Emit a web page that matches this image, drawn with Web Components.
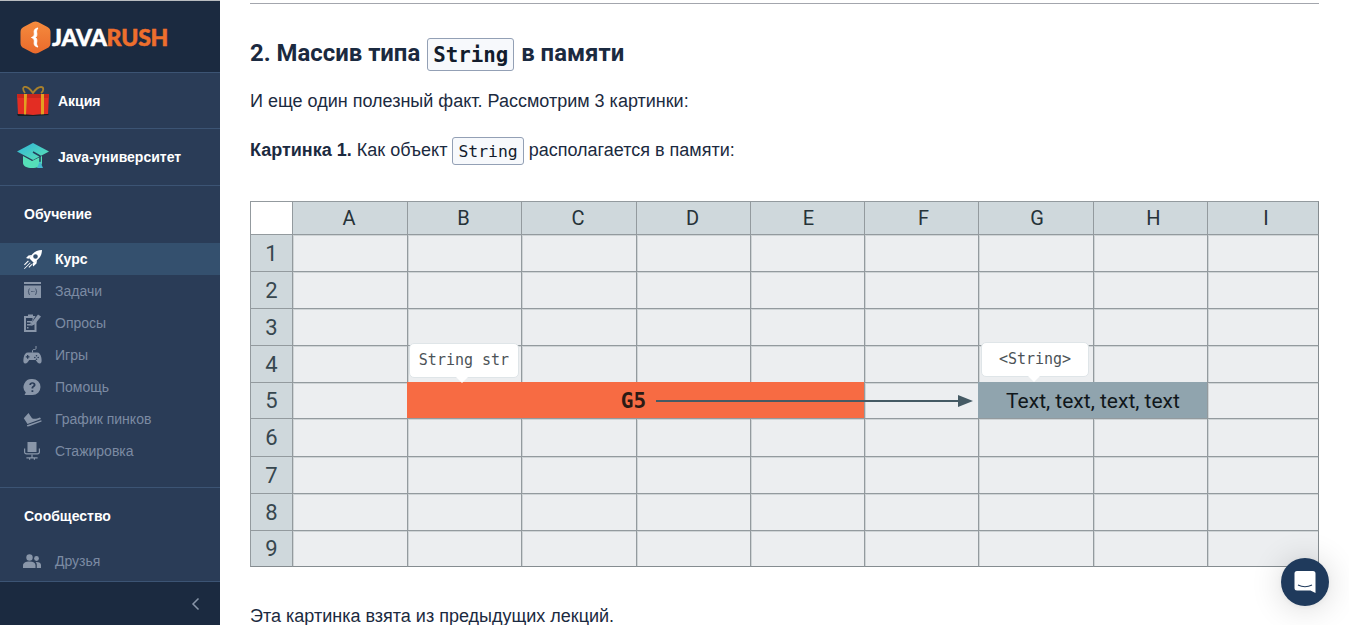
<!DOCTYPE html>
<html lang="ru">
<head>
<meta charset="utf-8">
<title>JavaRush</title>
<style>
  html, body { margin: 0; height: 100%; overflow: hidden; background: #fff; }
  body { font-family: "Liberation Sans", Arial, sans-serif; color: #1b2a40; }
  svg { display: block; }
</style>
</head>
<body>
<jr-app>
  <jr-sidebar slot="side">
    <jr-logo slot="logo"></jr-logo>
    <jr-promo short>
      <svg slot="icon" width="34" height="30" viewBox="0 0 34 30"><path d="M9 7C6 3 7 0 10 1c3 .6 5 3 7 6 2-3 5-6 8-6 3 0 3 4 0 6" fill="none" stroke="#a9812c" stroke-width="1.8"/><path d="M1 8h32l-1 20-15 1-15-1z" fill="#e32d23"/><path d="M1 8h32v4H1z" fill="#c8261d"/><path d="M8 8h3l-1 21H8zM25 8h3v21h-3z" fill="#e2a021"/><path d="M1 28l16 1 15-1 1 1-16 1H2z" fill="#1a1c20"/></svg>
      Акция
    </jr-promo>
    <jr-promo>
      <svg slot="icon" width="34" height="30" viewBox="0 0 34 30"><defs><linearGradient id="cap" x1="0" y1="0" x2="1" y2="1"><stop offset="0" stop-color="#2fb4d8"/><stop offset="1" stop-color="#5de3b4"/></linearGradient></defs><path d="M7 14v7c0 3 4 5 9 5s10-2 10-5v-7l-10 5z" fill="#55dfb8"/><path d="M1 9.500L17 1l16 8.500-16 8.500z" fill="url(#cap)"/><path d="M17 10l7 4v6" fill="none" stroke="#25405c" stroke-width="1.500"/><path d="M24 19l3 7h-6z" fill="#45b8cf"/></svg>
      Java-университет
    </jr-promo>
    <jr-section title="Обучение">
      <jr-nav-item active>
        <svg slot="icon" width="20" height="20" viewBox="0 0 20 20" fill="currentColor"><path d="M19 1c-4 .2-7 1.400-9.500 4L6 9l5 5 3.700-3.500C17.700 8 18.800 5 19 1zM12.500 5.200a2.300 2.300 0 1 1 0 4.600 2.300 2.300 0 0 1 0-4.600z" fill-rule="evenodd"/><path d="M5.500 6.500L9 6 5.500 9.800 3 9zM14 11l-.5 3.500-3.300 3-.8-2.700zM5 11.500l-4 4 .8.7 4-4zM7 13.500l-6 6 .6.500 6-6zM8.500 15l-3 3 .7.700 3-3z"/></svg>
        Курс
      </jr-nav-item>
      <jr-nav-item>
        <svg slot="icon" width="18" height="18" viewBox="0 0 18 18" fill="currentColor"><path d="M1 0h17v2H1z"/><path d="M1 3.500h17V16H1zM7 6.500c-1.500 0-1.500 1-1.500 2 0 .6-.3 1-.9 1.100.6.100.9.500.9 1.100 0 1 0 2 1.500 2v-.6c-.8 0-.8-.7-.8-1.500 0-.5-.2-.8-.6-1 .4-.2.6-.5.6-1 0-.8 0-1.500.8-1.500zM12 6.500v.6c.8 0 .8.700.8 1.500 0 .5.200.8.600 1-.4.200-.6.500-.6 1 0 .8 0 1.500-.8 1.500v.6c1.500 0 1.500-1 1.500-2 0-.6.300-1 .9-1.100-.6-.1-.9-.5-.9-1.100 0-1 0-2-1.500-2zM8 9h.8v.8H8zM9.300 9h.8v.8h-.8zM10.600 9h.8v.8h-.8z" fill-rule="evenodd"/></svg>
        Задачи
      </jr-nav-item>
      <jr-nav-item>
        <svg slot="icon" width="18" height="18" viewBox="0 0 18 18" fill="currentColor"><path d="M1 2h4V.5h5V2h2.500L9.500 7v1l-1.200 2.600L11 9.300l2.500-3V18H1zM3 4v12h8.500v-7L9 11.500H4V10h3.500V8.500H4V7h4.500l1-1V4zM4 13h1.500v1.500H4z" fill-rule="evenodd"/><path d="M15 .5l3 2-6.500 8-3 1.300.3-3.300z"/></svg>
        Опросы
      </jr-nav-item>
      <jr-nav-item>
        <svg slot="icon" width="19" height="19" viewBox="0 0 19 19" fill="currentColor"><path d="M5 6.500h9c2.500 0 3.700 2 4.300 5 .5 3 .7 5.500-1.300 6-1.600.4-3-1.500-4.300-3.500H6.300C5 16 3.600 17.900 2 17.500c-2-.5-1.800-3-1.300-6 .6-3 1.800-5 4.300-5zM4 9v1.200H2.800v1.300H4v1.200h1.300v-1.200h1.200v-1.300H5.300V9zm9.500 0a.8.8 0 1 0 0 1.600.8.800 0 0 0 0-1.600zm-1.700 1.700a.8.8 0 1 0 0 1.600.8.800 0 0 0 0-1.600zm3.400 0a.8.8 0 1 0 0 1.600.8.800 0 0 0 0-1.600zm-1.700 1.700a.8.8 0 1 0 0 1.600.8.800 0 0 0 0-1.600z" fill-rule="evenodd"/><path d="M9.500 6.500V5c0-1 .5-1.500 1.500-1.500s2 0 2-1V0" fill="none" stroke="currentColor" stroke-width="1"/></svg>
        Игры
      </jr-nav-item>
      <jr-nav-item>
        <svg slot="icon" width="18" height="18" viewBox="0 0 18 18" fill="currentColor"><path d="M9.500 1a8 8 0 0 1 0 16H1.500l1.300-2.500A8 8 0 0 1 9.500 1zM9.400 4.200c-1.900 0-3 1-3.100 2.700h1.800c.1-.8.500-1.200 1.300-1.200.7 0 1.200.4 1.200 1 0 .5-.3.900-.9 1.300-.9.600-1.200 1.200-1.200 2.200v.4h1.800v-.3c0-.6.200-.9.900-1.300.9-.6 1.300-1.300 1.300-2.300 0-1.500-1.200-2.500-3.100-2.500zM8.500 12.200v1.800h1.800v-1.800z" fill-rule="evenodd"/></svg>
        Помощь
      </jr-nav-item>
      <jr-nav-item>
        <svg slot="icon" width="19" height="18" viewBox="0 0 19 18" fill="currentColor"><path d="M.8 8.200L5.500 3 9 8.300c1.800.9 5 .7 8-.8l1 1.600-13.500 5z"/><path d="M3.800 15.200l14.500-5 .3 1.300-12.500 4.800-1.700.2z"/></svg>
        График пинков
      </jr-nav-item>
      <jr-nav-item>
        <svg slot="icon" width="18" height="18" viewBox="0 0 18 18" fill="currentColor"><path d="M4.500 0h9v10h-9z"/><path d="M1 6.500h1.200V10c0 .8.500 1.200 1.300 1.200h11c.8 0 1.300-.4 1.300-1.200V6.500H17V10c0 1.600-1 2.500-2.500 2.500h-11C2 12.500 1 11.600 1 10z"/><path d="M8.400 12.500h1.200v2.700h5v1.200H12v1.400h-1.200v-1.400H7.200v1.400H6v-1.400H3.400v-1.200h5z"/></svg>
        Стажировка
      </jr-nav-item>
    </jr-section>
    <jr-section title="Сообщество" divided>
      <jr-nav-item>
        <svg slot="icon" width="18" height="18" viewBox="0 0 18 18" fill="currentColor"><circle cx="6.500" cy="5.500" r="3.200"/><circle cx="13.500" cy="6.500" r="2.400"/><path d="M0 16v-2.500C0 11 2.500 9.500 6.500 9.500s6 1.500 6 4V16z"/><path d="M13.800 16v-3c0-1.300-.4-2.200-1.200-3 3-.4 5.400.8 5.400 3v3z"/></svg>
        Друзья
      </jr-nav-item>
    </jr-section>
    <jr-collapse slot="footer"></jr-collapse>
  </jr-sidebar>

  <jr-lesson slot="main">
    <hr>
    <h2>2. Массив типа <jr-code big>String</jr-code> в памяти</h2>
    <p>И еще один полезный факт. Рассмотрим 3 картинки:</p>
    <p class="tight"><strong>Картинка 1.</strong> Как объект <jr-code>String</jr-code> располагается в памяти:</p>
    <jr-sheet></jr-sheet>
    <p class="last">Эта картинка взята из предыдущих лекций.</p>
  </jr-lesson>
</jr-app>
<jr-chat-button></jr-chat-button>

<script>
  class JrApp extends HTMLElement {
    constructor() {
      super();
      this.attachShadow({mode: 'open'}).innerHTML = `
        <style>
          :host { display: flex; height: 100vh; overflow: hidden; }
          #side { flex: 0 0 220px; display: flex; }
          #main { flex: 1; min-width: 0; }
        </style>
        <div id="side"><slot name="side"></slot></div>
        <div id="main"><slot name="main"></slot></div>
      `;
    }
  }
  customElements.define('jr-app', JrApp);

  class JrSidebar extends HTMLElement {
    constructor() {
      super();
      this.attachShadow({mode: 'open'}).innerHTML = `
        <style>
          :host {
            display: flex;
            flex-direction: column;
            width: 220px;
            background: #2a3c57;
            font-family: "Liberation Sans", Arial, sans-serif;
            border-top: 1px solid #b9bcc0;
            box-sizing: border-box;
          }
          #list { flex: 1; min-height: 0; }
        </style>
        <slot name="logo"></slot>
        <div id="list"><slot></slot></div>
        <slot name="footer"></slot>
      `;
    }
  }
  customElements.define('jr-sidebar', JrSidebar);

  class JrLogo extends HTMLElement {
    constructor() {
      super();
      this.attachShadow({mode: 'open'}).innerHTML = `
        <style>
          :host {
            display: flex;
            align-items: center;
            gap: 1px;
            height: 71px;
            padding: 0 0 0 20px;
            background: #1b2a40;
            border-bottom: 1px solid #3c5474;
          }
          svg { display: block; margin-top: 1px; }
          #name {
            font: 900 23px/1 Lato, "Open Sans", sans-serif;
            color: #fff;
            letter-spacing: -.2px;
            -webkit-text-stroke: .5px currentColor;
            margin-top: 1px;
          }
          #name span { color: #ee6f2d; }
        </style>
        <svg width="31" height="33" viewBox="0 0 31 33">
          <defs>
            <linearGradient id="hex" x1="0" y1="0" x2="0" y2="1">
              <stop offset="0" stop-color="#f58b3d"/>
              <stop offset="1" stop-color="#ea6a2c"/>
            </linearGradient>
          </defs>
          <path d="M12.500 1.200q3-1.400 6 0l9 4.800q3 1.500 3 5v11q0 3.500-3 5l-9 4.800q-3 1.400-6 0l-9-4.800q-3-1.500-3-5V11q0-3.500 3-5z" fill="url(#hex)"/>
          <path d="M18 7c-3.500.5-4 2.500-3.800 4.500.2 2 .3 4-2.700 5 3 1 2.900 3 2.700 5-.2 2 .3 4 3.800 4.500-1.200-1.200-1.600-2.800-1.300-4.800.3-2 .2-3.700-1.300-4.700 1.500-1 1.600-2.700 1.300-4.700-.3-2 .1-3.600 1.300-4.800z" fill="#fff" stroke="#fff" stroke-width="1"/>
        </svg>
        <div id="name">JAVA<span>RUSH</span></div>
      `;
    }
  }
  customElements.define('jr-logo', JrLogo);

  class JrPromo extends HTMLElement {
    constructor() {
      super();
      this.attachShadow({mode: 'open'}).innerHTML = `
        <style>
          :host {
            display: flex;
            align-items: center;
            height: 56px;
            padding-left: 16px;
            border-bottom: 1px solid #3c5474;
            color: #fff;
            font-size: 14px;
            font-weight: 700;
          }
          :host([short]) { height: 55px; }
          #icon { width: 42px; flex: none; }
        </style>
        <div id="icon"><slot name="icon"></slot></div>
        <slot></slot>
      `;
    }
  }
  customElements.define('jr-promo', JrPromo);

  class JrSection extends HTMLElement {
    constructor() {
      super();
      this.attachShadow({mode: 'open'}).innerHTML = `
        <style>
          :host { display: block; }
          :host([divided]) { margin-top: 20px; border-top: 1px solid #3c5474; }
          h3 {
            margin: 0;
            height: 57px;
            padding-left: 24px;
            line-height: 56px;
            color: #fff;
            font-size: 14px;
            font-weight: 700;
          }
        </style>
        <h3></h3>
        <slot></slot>
      `;
      this.shadowRoot.querySelector('h3').textContent = this.getAttribute('title');
    }
  }
  customElements.define('jr-section', JrSection);

  class JrNavItem extends HTMLElement {
    constructor() {
      super();
      this.attachShadow({mode: 'open'}).innerHTML = `
        <style>
          :host {
            display: flex;
            align-items: center;
            height: 32px;
            padding-left: 23px;
            color: #7c8ba3;
            font-size: 14px;
          }
          :host([active]) {
            background: #34506e;
            color: #fff;
            font-weight: 700;
          }
          #icon { width: 32px; flex: none; color: #8996a9; }
          :host([active]) #icon { color: #fff; }
        </style>
        <div id="icon"><slot name="icon"></slot></div>
        <slot></slot>
      `;
    }
  }
  customElements.define('jr-nav-item', JrNavItem);

  class JrCollapse extends HTMLElement {
    constructor() {
      super();
      this.attachShadow({mode: 'open'}).innerHTML = `
        <style>
          :host {
            display: flex;
            align-items: center;
            justify-content: flex-end;
            flex: none;
            height: 43px;
            padding-right: 18px;
            background: #1b2a40;
            border-top: 1px solid #3c5474;
          }
        </style>
        <svg width="12" height="14" viewBox="0 0 12 14"><path d="M8.500 1.500L3 7l5.500 5.500" fill="none" stroke="#8996a9" stroke-width="1.500"/></svg>
      `;
    }
  }
  customElements.define('jr-collapse', JrCollapse);

  class JrLesson extends HTMLElement {
    constructor() {
      super();
      this.attachShadow({mode: 'open'}).innerHTML = `
        <style>
          :host { display: block; padding: 3px 30px 0; }
          ::slotted(hr) { margin: 0; border: 0; height: 1px; background: #a3a6ad; }
          ::slotted(h2) { margin: 33px 0 0; font-family: Roboto, sans-serif; font-size: 23.900px; line-height: 33px; font-weight: 700; }
          ::slotted(p) { margin: 19px 0 0; font-size: 18px; line-height: 24px; }
          ::slotted(p.tight) { margin-top: 25px; }
          ::slotted(p.last) { margin-top: 37px; }
          ::slotted(jr-sheet) { margin-top: 39px; }
        </style>
        <slot></slot>
      `;
    }
  }
  customElements.define('jr-lesson', JrLesson);

  class JrCode extends HTMLElement {
    constructor() {
      super();
      // no whitespace after the slot: the host is inline and would render it
      this.attachShadow({mode: 'open'}).innerHTML = `<style>
          :host {
            display: inline;
            padding: 3.500px 5px;
            border: 1px solid #93a0b5;
            border-radius: 3px;
            background: #f7f9fc;
            font-family: "DejaVu Sans Mono", "Liberation Mono", monospace;
            font-size: 16.400px;
            line-height: 1;
            color: #121c2c;
          }
          :host([big]) {
            margin: 0 1px;
            font-size: 20.800px;
          }
        </style><slot></slot>`;
    }
  }
  customElements.define('jr-code', JrCode);

  // the spreadsheet picture: tracks are the measured column and row sizes
  const COLS = [42, 115, 114, 115, 114, 114, 114, 115, 114, 112];
  const ROWS = [33, 37, 37, 37, 37, 36, 38, 37, 37, 37];
  // header letters are not quite centred in the picture
  const NUDGE = [0, -1, -1, -1, -1, 1, 2, 1, 3, 3];

  class JrSheet extends HTMLElement {
    constructor() {
      super();
      this.attachShadow({mode: 'open'}).innerHTML = `
        <style>
          :host {
            display: block;
            position: relative;
            width: 1069px;
            height: 366px;
            font-family: Roboto, sans-serif;
            color: #263238;
          }
          #grid {
            display: grid;
            grid-template-columns: ${COLS.map(c => c + 'px').join(' ')};
            grid-template-rows: ${ROWS.map(r => r + 'px').join(' ')};
            height: 100%;
          }
          #grid div {
            display: flex;
            align-items: center;
            justify-content: center;
            box-sizing: border-box;
            background: #eceef0;
            border-left: 1px solid #939a9e;
            border-top: 1px solid #939a9e;
            box-shadow: inset 1px 1px 0 #cfd4d6;
          }
          #grid .right { border-right: 1px solid #858c90; }
          #grid .bottom { border-bottom: 1px solid #858c90; }
          #grid .head { background: #cfd8dc; font-size: 20px; box-shadow: none; }
          #grid .num { font-size: 22px; color: #37474f; }
          #grid .corner { background: #fff; box-shadow: none; }
          #grid .ref {
            grid-column: span 4;
            padding-right: 5px;
            background: #f76b43;
            border-color: #f76b43;
            box-shadow: none;
            font: 700 21px "DejaVu Sans Mono", monospace;
            color: #2b1a14;
          }
          #grid .val {
            grid-column: span 2;
            background: #90a4ae;
            border-color: #90a4ae;
            box-shadow: none;
            font-size: 21px;
            color: #10171b;
          }
          .tip {
            position: absolute;
            display: flex;
            align-items: center;
            justify-content: center;
            box-sizing: border-box;
            height: 35px;
            padding-bottom: 2px;
            background: #fff;
            border: 1px solid #dfe5e8;
            border-radius: 5px;
            font: 15px "DejaVu Sans Mono", monospace;
            color: #4c5357;
          }
          .tip::after {
            content: "";
            position: absolute;
            left: 46px;
            bottom: -6px;
            width: 0;
            height: 0;
            border-left: 6px solid transparent;
            border-right: 6px solid transparent;
            border-top: 6px solid #fff;
          }
          svg { position: absolute; left: 406px; top: 190px; }
        </style>
        <div id="grid"></div>
        <span class="tip" style="left:159px;top:142px;width:110px">String str</span>
        <span class="tip" style="left:731px;top:141px;width:108px">&lt;String&gt;</span>
        <svg width="320" height="20" viewBox="0 0 320 20"><path d="M0 10h304" stroke="#455a64" stroke-width="1.800"/><path d="M302 4l15 6-15 6z" fill="#455a64"/></svg>
      `;
      const grid = this.shadowRoot.querySelector('#grid');
      const letters = ' ABCDEFGHI';
      for (let r = 0; r < ROWS.length; r++) {
        for (let c = 0; c < COLS.length; c++) {
          // row 5 has two merged ranges, B:E and G:H
          if (r === 5 && ((c > 2 && c < 6) || c === 8)) continue;
          const cell = document.createElement('div');
          if (r === 5 && c === 2) {
            cell.className = 'ref';
            cell.textContent = 'G5';
          } else if (r === 5 && c === 7) {
            cell.className = 'val';
            cell.textContent = 'Text, text, text, text';
          } else if (r === 0 && c === 0) {
            cell.className = 'corner';
          } else if (r === 0) {
            cell.className = 'head';
            cell.textContent = letters[c];
            const nudge = NUDGE[c] * 2;
            cell.style.padding = nudge > 0 ? `0 0 0 ${nudge}px` : `0 ${-nudge}px 0 0`;
          } else if (c === 0) {
            cell.className = 'head num';
            cell.textContent = r;
          }
          if (c === COLS.length - 1) cell.classList.add('right');
          if (r === ROWS.length - 1) cell.classList.add('bottom');
          grid.appendChild(cell);
        }
      }
    }
  }
  customElements.define('jr-sheet', JrSheet);

  class JrChatButton extends HTMLElement {
    constructor() {
      super();
      this.attachShadow({mode: 'open'}).innerHTML = `
        <style>
          :host {
            position: fixed;
            left: 1281px;
            top: 558px;
            display: flex;
            align-items: center;
            justify-content: center;
            width: 48px;
            height: 48px;
            border-radius: 50%;
            background: #1f3a5c;
            box-shadow: 0 1px 6px rgba(0,0,0,.06), 0 2px 32px rgba(0,0,0,.16);
          }
        </style>
        <svg width="22" height="24" viewBox="0 0 22 24">
          <path d="M3 1h16q2.500 0 2.500 2.500V23l-5-2.500H3Q.5 20.500.5 18V3.500Q.5 1 3 1z" fill="#fff"/>
          <path d="M4 15q7 3.500 14 0" fill="none" stroke="#1f3a5c" stroke-width="1.200"/>
        </svg>
      `;
    }
  }
  customElements.define('jr-chat-button', JrChatButton);
</script>
</body>
</html>
